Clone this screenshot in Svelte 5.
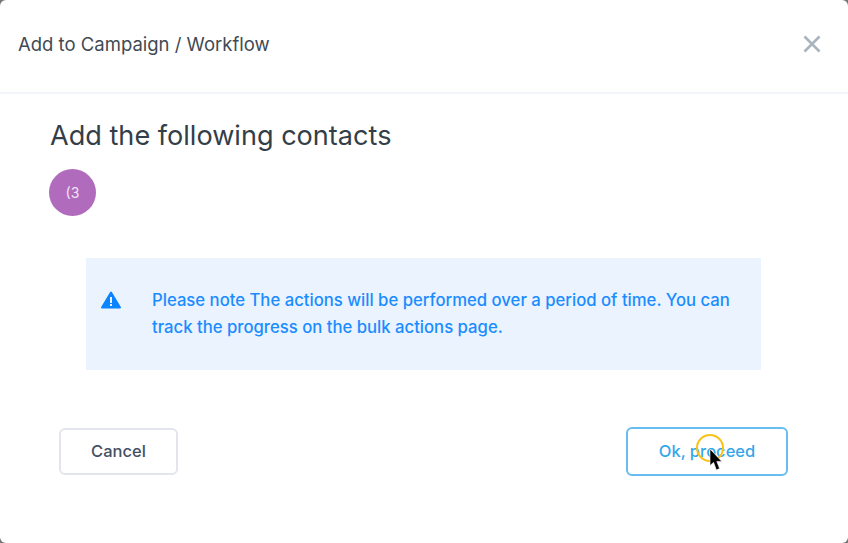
<script>
  let message = "Please note The actions will be performed over a period of time. You can track the progress on the bulk actions page.";
</script>

<div class="modal">
  <header class="modal-header">
    <span class="modal-title">Add to Campaign / Workflow</span>
    <button class="close" aria-label="Close">
      <svg width="18" height="18" viewBox="0 0 18 18">
        <path d="M1.5 1.5 L16.5 16.5 M16.5 1.5 L1.5 16.5" stroke="#a9b4bd" stroke-width="2.6" fill="none" />
      </svg>
    </button>
  </header>

  <section class="modal-body">
    <h2>Add the following contacts</h2>
    <div class="avatar">(3</div>

    <div class="alert">
      <svg class="alert-icon" width="22" height="18" viewBox="0 0 22 18">
        <path d="M11 1.5 L20 16.5 L2 16.5 Z" fill="#0a84ff" stroke="#0a84ff" stroke-width="2" stroke-linejoin="round" />
        <rect x="10" y="6" width="2" height="6" fill="#eaf3fe" />
        <rect x="10" y="13" width="2" height="2" fill="#eaf3fe" />
      </svg>
      <p>{message}</p>
    </div>
  </section>

  <footer class="modal-footer">
    <button class="btn btn-cancel">Cancel</button>
    <div class="proceed-wrap">
      <button class="btn btn-proceed">Ok, proceed</button>
      <div class="cursor">
        <span class="ring"></span>
        <svg class="pointer" width="14" height="24" viewBox="0 0 14 24">
          <path d="M1 1 L1 17.5 L4.6 14.4 L7.4 22 L10.6 20.6 L7.8 13.4 L12.8 13.4 Z" fill="#000" stroke="#fff" stroke-width="0.6" />
        </svg>
      </div>
    </div>
  </footer>
</div>

<style>
  :global(body) {
    margin: 0;
    background: #777;
  }

  .modal {
    width: 848px;
    height: 543px;
    background: #fff;
    border-radius: 6px;
    font-family: Inter, "Liberation Sans", sans-serif;
    color: #2f3b45;
    box-sizing: border-box;
    overflow: hidden;
  }

  .modal-header {
    height: 94px;
    box-sizing: border-box;
    border-bottom: 2px solid #f2f6fa;
    display: flex;
    align-items: center;
    justify-content: space-between;
    padding: 0 27px 4px 18px;
  }

  .modal-title {
    font-size: 18.5px;
    color: #3f4a54;
  }

  .close {
    background: none;
    border: none;
    padding: 0;
    display: flex;
  }

  .modal-body {
    padding: 25px 87px 0 49px;
  }

  h2 {
    margin: 0 0 0 1px;
    font-size: 27.1px;
    line-height: 34px;
    font-weight: 400;
    color: #333e48;
  }

  .avatar {
    width: 47px;
    height: 47px;
    margin-top: 16px;
    border-radius: 50%;
    background: #b06bbd;
    color: #f1e3f4;
    font-size: 14px;
    display: flex;
    align-items: center;
    justify-content: center;
  }

  .alert {
    margin: 42px 0 0 37px;
    height: 112px;
    box-sizing: border-box;
    background: #eaf3fe;
    display: flex;
    align-items: flex-start;
    gap: 30px;
    padding: 29px 20px 0 14px;
    color: #1a8cff;
  }

  .alert-icon {
    flex: none;
    margin-top: 4px;
  }

  .alert p {
    margin: 0;
    font-size: 16.7px;
    line-height: 27px;
    font-weight: 500;
  }

  .modal-footer {
    display: flex;
    justify-content: space-between;
    align-items: center;
    padding: 57px 60px 0 59px;
  }

  .btn {
    font-family: inherit;
    font-size: 16.5px;
    font-weight: 500;
    background: #fff;
    border-radius: 6px;
    box-sizing: border-box;
    padding-bottom: 3px;
  }

  .btn-cancel {
    width: 119px;
    height: 47px;
    border: 2px solid #e2e6ec;
    color: #465062;
  }

  .proceed-wrap {
    position: relative;
  }

  .btn-proceed {
    display: block;
    width: 162px;
    height: 49px;
    border: 2.5px solid #68bdf0;
    color: #36a6ea;
  }

  .cursor {
    position: absolute;
    left: 70px;
    top: 7px;
  }

  .ring {
    display: block;
    width: 28px;
    height: 28px;
    box-sizing: border-box;
    border: 2.5px solid #f9c21a;
    border-radius: 50%;
  }

  .pointer {
    position: absolute;
    left: 13px;
    top: 14px;
  }
</style>
